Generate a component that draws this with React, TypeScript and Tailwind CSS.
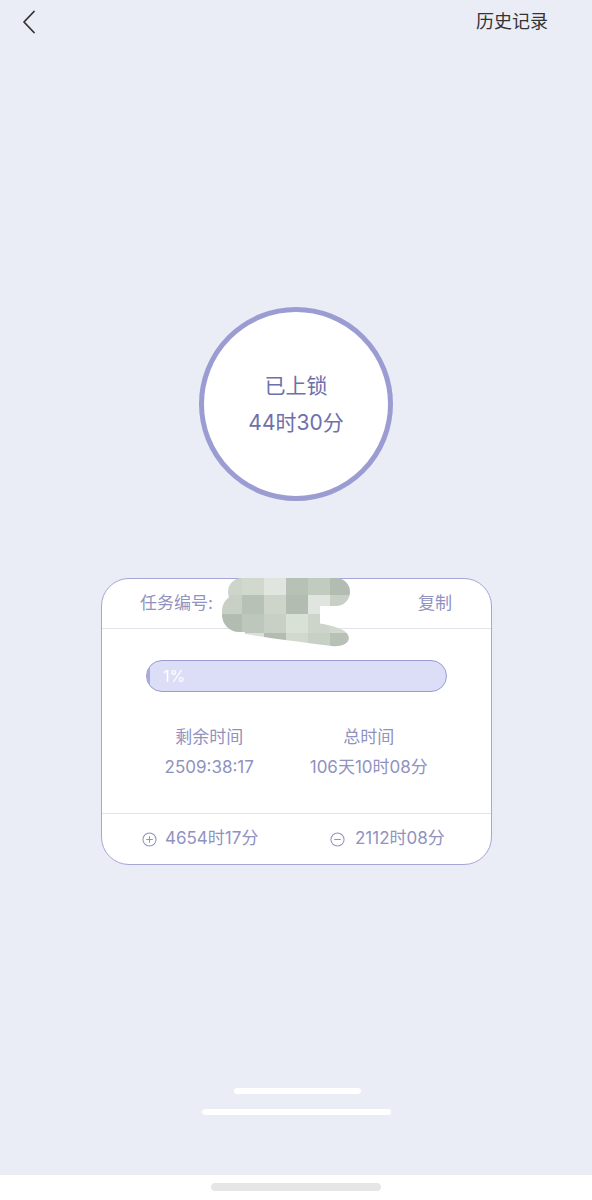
import React from "react";

function Mosaic() {
  const cols = ["#cdd5cb", "#c2cbbf", "#d9e0d7", "#b8c1b5", "#c8d0c5", "#e0e6df", "#bec7bb", "#d1d8ce", "#b3bcb0"];
  const tiles: JSX.Element[] = [];
  let k = 0;
  for (let r = 0; r < 4; r++) {
    for (let c = 0; c < 6; c++) {
      tiles.push(
        <rect key={k} x={c * 22} y={r * 19} width={22} height={19} fill={cols[(r * 4 + c * 7 + (r * c) % 2) % cols.length]} />
      );
      k++;
    }
  }
  return (
    <svg width="132" height="72" viewBox="0 0 132 72" className="absolute left-[220px] top-[576px]">
      <defs>
        <clipPath id="blob">
          <rect x="8" y="2" width="122" height="28" rx="14" />
          <rect x="2" y="18" width="78" height="38" rx="17" />
          <path d="M25 46 C 60 44, 95 44, 118 52 C 136 58, 130 72, 112 70 C 80 66, 50 62, 25 58 Z" />
          <rect x="30" y="10" width="70" height="48" />
        </clipPath>
      </defs>
      <g clipPath="url(#blob)">{tiles}</g>
    </svg>
  );
}

export default function App() {
  const font = { fontFamily: 'Inter, "Noto Sans CJK SC", "Noto Sans", sans-serif' };
  return (
    <div className="relative w-full h-[1200px] bg-[#eaecf6] flex flex-col" style={font}>
      {/* header */}
      <div className="h-[46px] flex items-center justify-between pl-[22px] pr-[44px]">
        <svg width="14" height="24" viewBox="0 0 14 24" className="-mt-[2px]">
          <polyline points="12,1.5 2,12 12,22.5" fill="none" stroke="#333" strokeWidth="1.8" strokeLinecap="round" strokeLinejoin="round" />
        </svg>
        <span className="text-[18px] text-[#333] leading-none -mt-[2px]">历史记录</span>
      </div>

      {/* circle */}
      <div className="mt-[261px] self-center w-[194px] h-[194px] rounded-full border-[5px] border-[#9b9dd2] bg-white flex flex-col items-center justify-center text-[#6e70ab] text-[21px] leading-none">
        <span>已上锁</span>
        <span className="mt-[16px]">44时30分</span>
      </div>

      {/* card */}
      <div className="mt-[77px] ml-[101px] w-[391px] h-[287px] rounded-[28px] border border-[#a4a6d6] bg-white flex flex-col text-[#9092c0]">
        <div className="h-[50px] flex items-center justify-between pl-[38px] pr-[39px] border-b border-[#e2e3ea] text-[17px]">
          <span>任务编号:</span>
          <span>复制</span>
        </div>
        <div className="mt-[31px] mx-[44px] h-[32px] rounded-full border border-[#9b9dd2] bg-[#dcddf7] relative overflow-hidden flex items-center">
          <div className="absolute left-0 top-0 bottom-0 w-[3px] bg-[#a7a9db]" />
          <span className="pl-[16px] text-white text-[16px] leading-none">1%</span>
        </div>
        <div className="mt-[37px] grid grid-cols-2 text-[17px] leading-none">
          <div className="flex flex-col items-center pl-[20px]">
            <span>剩余时间</span>
            <span className="mt-[13px]">2509:38:17</span>
          </div>
          <div className="flex flex-col items-center pr-[50px]">
            <span>总时间</span>
            <span className="mt-[13px]">106天10时08分</span>
          </div>
        </div>
        <div className="mt-[37px] border-t border-[#e2e3ea] flex-1 flex items-center text-[17px]">
          <div className="flex items-center pl-[40px] w-[228px]">
            <svg width="15" height="15" viewBox="0 0 16 16" className="mr-[8px]">
              <circle cx="8" cy="8" r="7" fill="none" stroke="#9092c0" strokeWidth="1.1" />
              <line x1="4.5" y1="8" x2="11.5" y2="8" stroke="#9092c0" strokeWidth="1.1" />
              <line x1="8" y1="4.5" x2="8" y2="11.5" stroke="#9092c0" strokeWidth="1.1" />
            </svg>
            <span>4654时17分</span>
          </div>
          <div className="flex items-center">
            <svg width="15" height="15" viewBox="0 0 16 16" className="mr-[10px]">
              <circle cx="8" cy="8" r="7" fill="none" stroke="#9092c0" strokeWidth="1.1" />
              <line x1="4.5" y1="8" x2="11.5" y2="8" stroke="#9092c0" strokeWidth="1.1" />
            </svg>
            <span>2112时08分</span>
          </div>
        </div>
      </div>

      <Mosaic />

      {/* bottom bars */}
      <div className="mt-[223px] self-center w-[127px] h-[6px] rounded-full bg-white ml-[2px]" />
      <div className="mt-[15px] self-center w-[189px] h-[6px] rounded-full bg-white ml-[1px]" />

      {/* bottom white area */}
      <div className="mt-auto h-[25px] bg-white flex justify-center pt-[8px]">
        <div className="w-[170px] h-[8px] rounded-full bg-[#e6e6e6]" />
      </div>
    </div>
  );
}
